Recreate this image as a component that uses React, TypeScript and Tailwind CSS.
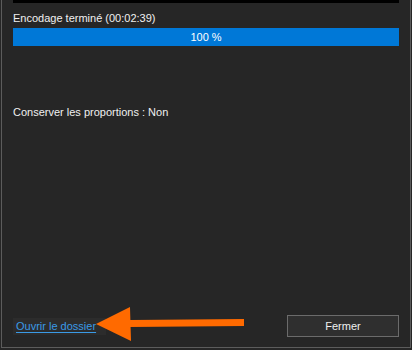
import React from "react";

const App: React.FC = () => {
  return (
    <div className="w-[412px] h-[350px] bg-[#262626] pl-px pr-px pb-[2px] font-['Liberation_Sans',Arial,sans-serif] text-[11px] text-[#f0f0f0]">
      {/* Dialog frame */}
      <div className="relative flex h-full flex-col border-x border-b border-[#5c5c5c] bg-[#262626] px-[11px]">
        {/* Preview strip */}
        <div className="h-[3px] bg-black" />

        <div className="mt-[7px] leading-[16px]">Encodage terminé (00:02:39)</div>

        {/* Progress bar */}
        <div className="mt-[2px] flex h-[18px] items-center justify-center bg-[#0078d7] leading-none text-white">
          100 %
        </div>

        <div className="mt-[58px] leading-[16px]">Conserver les proportions : Non</div>

        {/* Footer */}
        <div className="mt-auto mb-[10px] flex items-center justify-between">
          <div className="flex h-[17px] items-center bg-[#2c2c2c] pl-[3px] pr-[10px]">
            <a href="#" className="leading-none text-[#3a9ae6] underline underline-offset-2">
              Ouvrir le dossier
            </a>
          </div>
          <button className="h-[22px] w-[112px] border border-[#6b6b6b] bg-[#2f2f2f] leading-none text-[#f0f0f0]">
            Fermer
          </button>
        </div>

        {/* Annotation arrow */}
        <svg
          className="pointer-events-none absolute left-0 top-0"
          width="410"
          height="348"
          viewBox="1 0 410 348"
        >
          <polygon points="129,320 243,319 243,326 129,327" fill="#ff6a00" />
          <polygon points="95,324 129,307 130,341" fill="#ff6a00" />
        </svg>
      </div>
    </div>
  );
};

export default App;
